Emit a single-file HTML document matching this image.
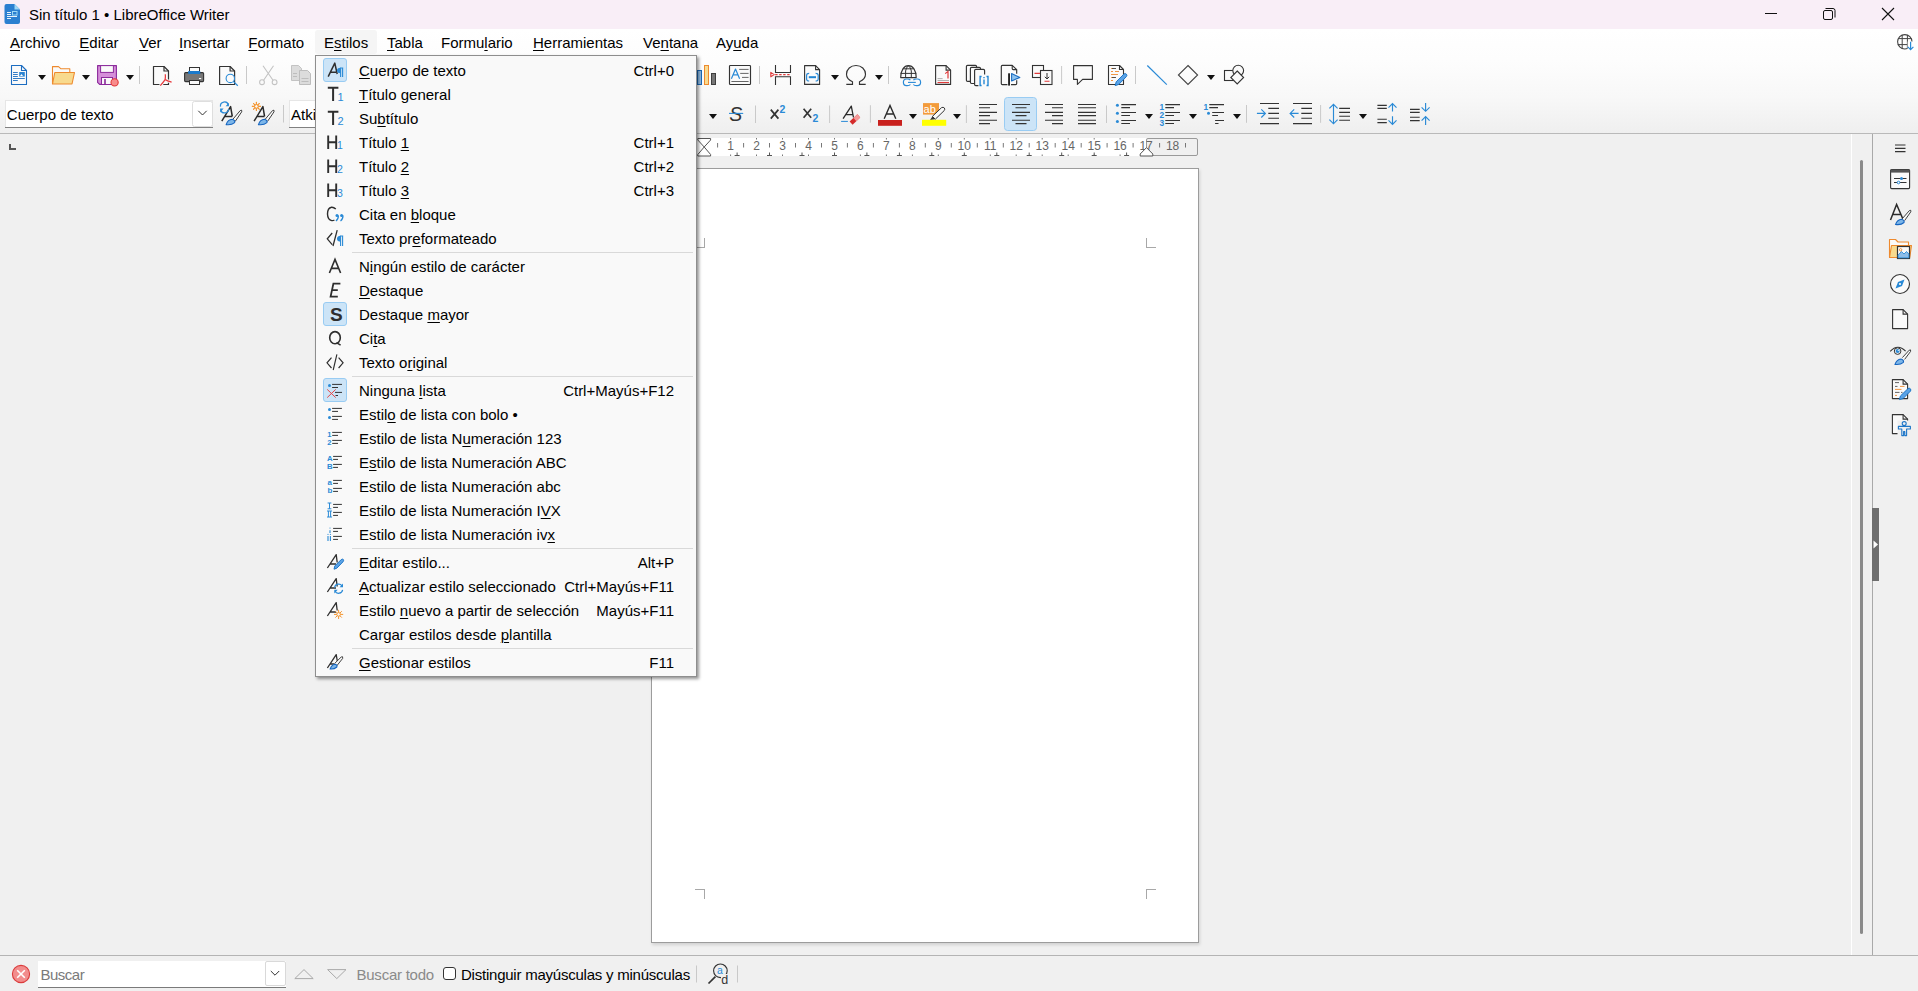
<!DOCTYPE html><html><head><meta charset="utf-8"><style>
*{margin:0;padding:0;box-sizing:border-box}
html,body{width:1918px;height:991px;overflow:hidden;background:#F0F0F0;font-family:"Liberation Sans", sans-serif}
.t{position:absolute;white-space:pre;line-height:normal;font-family:"Liberation Sans", sans-serif}
.a{position:absolute}
u{text-decoration:underline;text-underline-offset:2px;text-decoration-thickness:1px}
svg{position:absolute;overflow:visible}
</style></head><body>

<div class="a" style="left:0;top:0;width:1918px;height:29px;background:#F9EEF7"></div>
<div class="t" style="left:29px;top:6.3px;font-size:15px;color:#000;">Sin título 1 • LibreOffice Writer</div>
<div class="a" style="left:0;top:29px;width:1918px;height:104px;background:linear-gradient(#FFFFFF 0%,#FDFDFD 30%,#F8F8F8 65%,#EFEFEF 100%)"></div>
<div class="a" style="left:0;top:133px;width:1918px;height:1px;background:#B9B9B9"></div>
<div class="a" style="left:315px;top:30px;width:62px;height:24px;background:#F5F5F5;border-radius:3px"></div>
<div class="t" style="left:10px;top:34.3px;font-size:15px;color:#000;"><u>A</u>rchivo</div>
<div class="t" style="left:79.3px;top:34.3px;font-size:15px;color:#000;"><u>E</u>ditar</div>
<div class="t" style="left:139px;top:34.3px;font-size:15px;color:#000;"><u>V</u>er</div>
<div class="t" style="left:179px;top:34.3px;font-size:15px;color:#000;"><u>I</u>nsertar</div>
<div class="t" style="left:248.3px;top:34.3px;font-size:15px;color:#000;"><u>F</u>ormato</div>
<div class="t" style="left:324px;top:34.3px;font-size:15px;color:#000;">E<u>s</u>tilos</div>
<div class="t" style="left:387px;top:34.3px;font-size:15px;color:#000;"><u>T</u>abla</div>
<div class="t" style="left:441px;top:34.3px;font-size:15px;color:#000;">Formu<u>l</u>ario</div>
<div class="t" style="left:533px;top:34.3px;font-size:15px;color:#000;"><u>H</u>erramientas</div>
<div class="t" style="left:643px;top:34.3px;font-size:15px;color:#000;">Ve<u>n</u>tana</div>
<div class="t" style="left:716px;top:34.3px;font-size:15px;color:#000;">Ay<u>u</u>da</div>
<div class="a" style="left:9px;top:144px;width:2px;height:6px;background:#555"></div>
<div class="a" style="left:9px;top:148px;width:7px;height:2px;background:#555"></div>
<div class="a" style="left:651px;top:138px;width:495px;height:18px;background:#FFFFFF"></div>
<div class="a" style="left:1146px;top:138px;width:52px;height:18px;border:1px solid #9A9A9A;border-radius:2px;background:#F0F0F0"></div>
<div class="a" style="left:651px;top:168px;width:548px;height:775px;background:#FFF;border:1px solid #9C9C9C;box-shadow:1px 2px 3px rgba(0,0,0,0.13)"></div>
<div class="a" style="left:695px;top:247px;width:10px;height:1px;background:#A8A8A8"></div>
<div class="a" style="left:704px;top:238px;width:1px;height:10px;background:#A8A8A8"></div>
<div class="a" style="left:1146px;top:247px;width:10px;height:1px;background:#A8A8A8"></div>
<div class="a" style="left:1146px;top:238px;width:1px;height:10px;background:#A8A8A8"></div>
<div class="a" style="left:695px;top:889px;width:10px;height:1px;background:#A8A8A8"></div>
<div class="a" style="left:704px;top:889px;width:1px;height:10px;background:#A8A8A8"></div>
<div class="a" style="left:1146px;top:889px;width:10px;height:1px;background:#A8A8A8"></div>
<div class="a" style="left:1146px;top:889px;width:1px;height:10px;background:#A8A8A8"></div>
<div class="a" style="left:1851px;top:134px;width:1px;height:821px;background:#FFFFFF"></div>
<div class="a" style="left:1860px;top:160px;width:3px;height:774px;background:#8A8A8A;border-radius:2px"></div>
<div class="a" style="left:1872px;top:134px;width:1px;height:821px;background:#A9A9A9"></div>
<div class="a" style="left:1872px;top:508px;width:7px;height:73px;background:#6E6E6E"></div>
<svg style="left:0;top:0" width="1918" height="991"><path d="M1873.5 540.5 L1878 544.5 L1873.5 548.5Z" fill="#fff"/></svg>
<div class="a" style="left:0;top:955px;width:1918px;height:1px;background:#B4B4B4"></div>
<div class="a" style="left:38px;top:961px;width:248px;height:27px;background:#FFF;border-bottom:1px solid #7A7A7A"></div>
<div class="a" style="left:265px;top:961px;width:21px;height:25px;background:#FFF;border:1px solid #D9D9D9;border-radius:2px"></div>
<div class="t" style="left:40.5px;top:966.3px;font-size:15px;color:#7A7A7A;letter-spacing:-0.5px">Buscar</div>
<div class="t" style="left:356.5px;top:966.3px;font-size:15px;color:#8A8A8A;letter-spacing:-0.24px">Buscar todo</div>
<div class="a" style="left:443px;top:967px;width:13px;height:13px;border:1px solid #333;border-radius:3px;background:#FFF"></div>
<div class="t" style="left:461px;top:966.3px;font-size:15px;color:#000;letter-spacing:-0.23px">Distinguir mayúsculas y minúsculas</div>
<svg style="left:0;top:0" width="1918" height="991" viewBox="0 0 1918 991"><path d="M4.5 6 Q4.5 4 6.5 4 H14.5 L20 9.5 V22 Q20 24 18 24 H6.5 Q4.5 24 4.5 22 Z" fill="#2B7FD0"/><path d="M14.5 4 L20 9.5 H14.5 Z" fill="#9ED8F5"/><path d="M7 12.5 H11 M7 14.5 H11 M7 16.5 H17 M7 18.5 H11" stroke="#E8F2FB" stroke-width="1"/><rect x="12.5" y="11.5" width="4.5" height="3.5" fill="none" stroke="#9ED8F5" stroke-width="1"/><path d="M1765 13.5 H1777" stroke="#111" stroke-width="1"/><rect x="1823.5" y="10.5" width="9" height="9" rx="1.5" fill="none" stroke="#111" stroke-width="1"/><path d="M1825.5 8.5 H1833 Q1835 8.5 1835 10.5 V17.5" fill="none" stroke="#111" stroke-width="1"/><path d="M1882 8 L1894 20 M1894 8 L1882 20" stroke="#111" stroke-width="1.1"/><circle cx="1904.8" cy="41.8" r="7.2" fill="none" stroke="#444" stroke-width="1.1"/><path d="M1898 38.6 H1911.6 M1897.8 44.6 H1911.8 M1902.2 35 V48.6 M1907.4 35 V48.6" stroke="#444" stroke-width="1"/><rect x="1907.6" y="41.5" width="6" height="9" fill="#FFFFFF"/><path d="M1910.6 41.8 V49.6 M1907.8 46.8 L1910.6 49.6 L1913.4 46.8" fill="none" stroke="#2A8AD6" stroke-width="1.2"/><path d="M11.5 65.5 H21.5 L26.5 70.5 V84.5 H11.5 Z" fill="#FAFAFA" stroke="#1C6DC1" stroke-width="1.1" stroke-linejoin="round"/><path d="M21.5 65.5 V70.5 H26.5" fill="none" stroke="#1C6DC1" stroke-width="1.1"/><path d="M13 72.5 H17.8 M13 74.5 H17.8 M13 76.5 H17.8 M13 78.5 H24.8 M13 80.5 H17.8" stroke="#1C6DC1" stroke-width="0.9"/><rect x="19.2" y="72" width="5.6" height="4.6" fill="#2B84D2"/><path d="M20 76 L21.5 74 L23 76 Z" fill="#fff"/><path d="M38 75 H46 L42 80 Z" fill="#111"/><path d="M52.5 84 V66.6 H58.5 L61 68.8 H69.8 V72.4" fill="#FAFAFA" stroke="#EE8A2E" stroke-width="1.1" stroke-linejoin="round"/><path d="M54.8 72.5 H74.5 L72 84 H52.5 Z" fill="#F8DA8E" stroke="#EE8A2E" stroke-width="1.1" stroke-linejoin="round"/><path d="M82 75 H90 L86 80 Z" fill="#111"/><path d="M97.6 65.6 H116.4 V84.4 H99.6 L97.6 82.4 Z" fill="#D58FD9" stroke="#8B2A9B" stroke-width="1.1" stroke-linejoin="round"/><rect x="100.6" y="65.6" width="12.8" height="6.8" fill="#FAFAFA" stroke="#8B2A9B" stroke-width="1"/><rect x="101.5" y="77.5" width="11" height="7" fill="#FAFAFA" stroke="#8B2A9B" stroke-width="1"/><rect x="104.2" y="79" width="1.6" height="5.5" fill="#8B2A9B"/><circle cx="114.6" cy="82.4" r="3.6" fill="#F88C8C" stroke="#E23A3A" stroke-width="1.1"/><path d="M126 75 H134 L130 80 Z" fill="#111"/><path d="M139.5 66 V84" stroke="#C9C9C9" stroke-width="1"/><path d="M153.5 66.5 H164.0 L168.5 71.0 V84.5 H153.5 Z" fill="#FAFAFA" stroke="#333333" stroke-width="1.2" stroke-linejoin="round"/><path d="M164.0 66.5 V71.0 H168.5" fill="none" stroke="#333333" stroke-width="1.2"/><path d="M160.3 85.6 L165.3 80.2 V74.2 M165.3 80.2 Q168 80.6 171.6 82.2" fill="none" stroke="#FAFAFA" stroke-width="3"/><path d="M160.3 85.6 Q163.5 82 165.1 79.6 Q165.6 77 165.3 74.2 M165.1 79.6 Q167 81 171.6 82.2" fill="none" stroke="#E8393C" stroke-width="1.25"/><rect x="189.5" y="67.5" width="10" height="5" fill="#FAFAFA" stroke="#333" stroke-width="1"/><rect x="184.6" y="72.6" width="19" height="9" rx="1" fill="#777" stroke="#333" stroke-width="1.1"/><rect x="188.2" y="71" width="12" height="3" fill="#1A7ACC"/><rect x="199" y="78" width="2.2" height="1.1" fill="#fff"/><rect x="189.5" y="80.5" width="10" height="4" fill="#FAFAFA" stroke="#333" stroke-width="1"/><path d="M219.6 66.5 H230.1 L234.6 71.0 V84.5 H219.6 Z" fill="#FAFAFA" stroke="#333333" stroke-width="1.2" stroke-linejoin="round"/><path d="M230.1 66.5 V71.0 H234.6" fill="none" stroke="#333333" stroke-width="1.2"/><circle cx="230.3" cy="78.4" r="4.2" fill="#FAFAFA" stroke="#2A8AD6" stroke-width="1.1"/><path d="M233.3 81.4 L237.8 85.8" stroke="#2A8AD6" stroke-width="1.2"/><path d="M246.5 66 V84" stroke="#C9C9C9" stroke-width="1"/><circle cx="262" cy="82.2" r="2.4" fill="none" stroke="#C3C3C3" stroke-width="1.1"/><circle cx="274.6" cy="82.2" r="2.4" fill="none" stroke="#C3C3C3" stroke-width="1.1"/><path d="M263.6 80.3 L273.5 65.8 M273 80.3 L263 65.8" stroke="#C3C3C3" stroke-width="1.1"/><path d="M291.5 65.5 H298.5 L301.5 68.5 V80.5 H291.5 Z" fill="#DCDCDC" stroke="#C3C3C3"/><path d="M299.5 70.5 H307.5 L310.5 73.5 V84.5 H299.5 Z" fill="#DCDCDC" stroke="#BDBDBD"/><path d="M301.5 78.5 H308.5 M301.5 81.5 H308.5 M293 73.5 H297 M293 76.5 H297" stroke="#BDBDBD"/><rect x="697.5" y="70.5" width="4" height="14" fill="#8DB9E2" stroke="#1B69B6" stroke-width="1"/><rect x="704.5" y="65.5" width="4" height="19" fill="#F8DB92" stroke="#EE8A2E" stroke-width="1"/><rect x="711.5" y="73.5" width="4" height="11" fill="#777" stroke="#3E3E3E" stroke-width="1"/><rect x="729.5" y="65.5" width="21" height="19" rx="0.8" fill="#FAFAFA" stroke="#333" stroke-width="1.15"/><path d="M731.4 78.7 L735.5 69 L739.6 78.7 M733 74.8 H738" fill="none" stroke="#2A8AD6" stroke-width="1.2" stroke-linejoin="round"/><path d="M739.2 69.4 H748.6 M740.2 73.4 H748.6 M742 77.4 H748.6 M731.4 81.5 H748.6" stroke="#666" stroke-width="1"/><path d="M759.5 66 V84" stroke="#C9C9C9" stroke-width="1"/><path d="M775.5 65 V72.5 H790.5 V65 M775.5 85 V76.8 H790.5 V85" fill="none" stroke="#333" stroke-width="1.1"/><path d="M775.2 74.6 H791" stroke="#E03A3A" stroke-width="1.1" stroke-dasharray="2.4 1.6"/><path d="M770.8 72.4 L774.2 74.6 L770.8 76.8 Z" fill="#FAFAFA" stroke="#E03A3A" stroke-width="1.1" stroke-linejoin="round"/><path d="M804.6 65.6 H815.6 L819.6 69.6 V84.4 H804.6 Z" fill="#FAFAFA" stroke="#333333" stroke-width="1.1" stroke-linejoin="round"/><path d="M815.6 65.6 V69.6 H819.6" fill="none" stroke="#333333" stroke-width="1.1"/><path d="M809.2 73.4 Q806.8 73.4 806.6 75.2 V79.2 Q806.8 81 809.2 81 M815.6 73.4 Q818 73.4 818.2 75.2 V79.2 Q818 81 815.6 81" fill="none" stroke="#2A8AD6" stroke-width="1.2"/><path d="M808.8 77.2 H816" stroke="#1F84D2" stroke-width="2"/><path d="M831 75 H839 L835 80 Z" fill="#111"/><path d="M846.3 84.3 H852.5 V81.8 C848.5 80, 846.5 77.2, 846.5 74.3 C846.5 69.2, 850.6 65.5, 856 65.5 C861.4 65.5, 865.5 69.2, 865.5 74.3 C865.5 77.2, 863.5 80, 859.5 81.8 V84.3 H865.7" fill="none" stroke="#333" stroke-width="1.15"/><path d="M875 75 H883 L879 80 Z" fill="#111"/><path d="M888.5 66 V84" stroke="#C9C9C9" stroke-width="1"/><path d="M900.7 77.6 C900.7 70.2, 904 65.6, 908.45 65.6 C912.9 65.6, 916.2 70.2, 916.2 77.6 Z" fill="#FAFAFA" stroke="#333" stroke-width="1.15" stroke-linejoin="round"/><path d="M903 68.8 H913.9 M900.7 73.4 H916.2 M905.6 77.6 V71 Q905.9 67.6 908.45 65.8 Q911 67.6 911.3 71 V77.6" fill="none" stroke="#333" stroke-width="1"/><path d="M910.4 80.2 Q909.6 79 907.2 79 H906.4 Q903.4 79 903.4 82.35 Q903.4 85.7 906.4 85.7 H907.2 Q909.6 85.7 910.4 84.5 M913.4 80.2 Q914.2 79 916.6 79 H917.4 Q920.6 79 920.6 82.35 Q920.6 85.7 917.4 85.7 H916.6 Q914.2 85.7 913.4 84.5" fill="none" stroke="#2A8AD6" stroke-width="1.2"/><path d="M908 82.4 H915.8" stroke="#2A8AD6" stroke-width="1.1"/><path d="M935.6 65.6 H946.1 L950.6 70.1 V84.4 H935.6 Z" fill="#FAFAFA" stroke="#333333" stroke-width="1.1" stroke-linejoin="round"/><path d="M946.1 65.6 V70.1 H950.6" fill="none" stroke="#333333" stroke-width="1.1"/><path d="M945.2 73.6 L948 71.4 V78.6" fill="none" stroke="#E03A3A" stroke-width="1.2"/><path d="M937.5 78.6 H942.6 M937.5 80.5 H949" stroke="#A8A8A8" stroke-width="0.9"/><path d="M937.5 82.5 H949" stroke="#E03A3A" stroke-width="1.1"/><path d="M970.3 81.4 H967.6 Q966.4 81.4 966.4 80.2 V66.6 Q966.4 65.4 967.6 65.4 H975.4 Q976.6 65.4 976.6 66.6 V67.4" fill="none" stroke="#333" stroke-width="1.15"/><path d="M974.5 83.5 H971.6 Q970.4 83.5 970.4 82.3 V68.6 Q970.4 67.4 971.6 67.4 H979.3 Q980.5 67.4 980.5 68.6 V69.4" fill="none" stroke="#333" stroke-width="1.15"/><path d="M978.4 85.6 H975.8 Q974.6 85.6 974.6 84.4 V70.6 Q974.6 69.4 975.8 69.4 H983.4 Q984.6 69.4 984.6 70.6 V74.4" fill="none" stroke="#333" stroke-width="1.15"/><path d="M981.6 76.5 H980.1 V85.5 H981.6 M986.5 76.5 H988 V85.5 H986.5 M984 79.4 V84.2 M984 77.1 V78.2" fill="none" stroke="#1F84D2" stroke-width="1.35"/><path d="M1007.4 84.6 H1002.4 Q1001.3 84.6 1001.3 83.5 V66.4 Q1001.3 65.3 1002.4 65.3 H1012.2 L1016.7 69.6 V73.8 M1016.7 80.3 V83.5 Q1016.7 84.6 1015.6 84.6 H1011" fill="none" stroke="#333" stroke-width="1.15" stroke-linejoin="round"/><path d="M1012.2 65.3 V68.6 Q1012.2 69.6 1013.2 69.6 H1016.7" fill="none" stroke="#333" stroke-width="1.1"/><rect x="1008.1" y="73.3" width="1.9" height="12.3" fill="#222"/><path d="M1011.6 73.6 L1019.8 77.4 L1011.6 81 Z" fill="#8DC3F0" stroke="#1C6DC1" stroke-width="1.1" stroke-linejoin="round"/><rect x="1032.5" y="65.5" width="11" height="12" fill="#FAFAFA" stroke="#333" stroke-width="1.1"/><rect x="1040.5" y="70.5" width="11.5" height="14" fill="#FAFAFA" stroke="#333" stroke-width="1.1"/><path d="M1034.5 73.4 H1040 M1044.5 81.3 H1049.5" stroke="#E03A3A" stroke-width="1.1"/><path d="M1047 73 V79 M1044.8 76.8 L1047 79 L1049.2 76.8" fill="none" stroke="#333" stroke-width="1"/><path d="M1061.6 66 V84" stroke="#C9C9C9" stroke-width="1"/><path d="M1073.6 65.6 H1092.4 V79.4 H1082.6 L1077.4 84.4 V79.4 H1073.6 Z" fill="#FAFAFA" stroke="#333" stroke-width="1.1" stroke-linejoin="round"/><path d="M1108.5 65.5 H1119.5 L1123.5 69.5 V84.5 H1108.5 Z" fill="#FAFAFA" stroke="#333333" stroke-width="1.1" stroke-linejoin="round"/><path d="M1119.5 65.5 V69.5 H1123.5" fill="none" stroke="#333333" stroke-width="1.1"/><path d="M1111 68.5 H1114 M1111 71.5 H1113 M1115 71.5 H1119 M1111 74.5 H1118 M1111 77.5 H1115 M1111 80.5 H1113" stroke="#EE8A2E" stroke-width="0.9"/><path d="M1112 68.5 H1116 M1112 77.5 H1116" stroke="#444" stroke-width="0.9"/><path d="M1115.2 85.6 L1116.2 81.8 L1124 74 Q1125.2 73 1126.4 74.2 Q1127.4 75.4 1126.4 76.6 L1118.8 84.4 Z" fill="#5BA3E6" stroke="#1F77C8" stroke-width="1"/><path d="M1135.5 66 V84" stroke="#C9C9C9" stroke-width="1"/><path d="M1147.3 65.5 L1166.8 84.6" stroke="#2A8AD6" stroke-width="1.2"/><path d="M1188 65.5 L1197.6 75 L1188 84.5 L1178.4 75 Z" fill="none" stroke="#444" stroke-width="1.1"/><path d="M1207 75 H1215 L1211 80 Z" fill="#111"/><rect x="1224.5" y="70.5" width="10" height="10" fill="#FAFAFA" stroke="#333" stroke-width="1.1"/><circle cx="1238.2" cy="70.6" r="5.4" fill="#FAFAFA" stroke="#333" stroke-width="1.1"/><path d="M1237.2 71 L1243.6 77.5 L1237.2 84 L1230.8 77.5 Z" fill="#FAFAFA" stroke="#333" stroke-width="1.1"/><rect x="5.5" y="100.5" width="207" height="27" fill="#FFFFFF" stroke="#E6E6E6" stroke-width="1"/><path d="M5 127.5 H213" stroke="#808080" stroke-width="1"/><rect x="192.5" y="101.5" width="20" height="25" rx="2" fill="#FFFFFF" stroke="#DEDEDE" stroke-width="1"/><path d="M198.3 110.8 L202.5 115 L206.7 110.8" fill="none" stroke="#333" stroke-width="1"/><rect x="289.5" y="100.5" width="30" height="27" fill="#FFFFFF" stroke="#E6E6E6" stroke-width="1"/><path d="M289 127.5 H319" stroke="#808080" stroke-width="1"/><path d="M221.8 121.2 L230.6 106.6 L232.3 116.5 M224.6 116.4 H232.2" fill="none" stroke="#2A2A2A" stroke-width="1.5" stroke-linejoin="round"/><path d="M232.6 119.6 L240.2 110.6 Q242.3 109.2 241.7 111.8 L235.2 121.4" fill="#FAFAFA" stroke="#2A2A2A" stroke-width="0.9"/><path d="M226.2 124.6 Q227.8 119.6 232.2 119.3 Q235.5 120.3 234.6 122.6 Q231.5 125.3 226.2 124.6 Z" fill="#7DB6E8" stroke="#1565C0" stroke-width="1.1"/><path d="M254.10000000000002 121.2 L262.9 106.6 L264.6 116.5 M256.9 116.4 H264.5" fill="none" stroke="#2A2A2A" stroke-width="1.5" stroke-linejoin="round"/><path d="M264.9 119.6 L272.5 110.6 Q274.6 109.2 274.0 111.8 L267.5 121.4" fill="#FAFAFA" stroke="#2A2A2A" stroke-width="0.9"/><path d="M258.5 124.6 Q260.1 119.6 264.5 119.3 Q267.8 120.3 266.9 122.6 Q263.8 125.3 258.5 124.6 Z" fill="#7DB6E8" stroke="#1565C0" stroke-width="1.1"/><path d="M220.5 106.6 A4 4 0 0 1 228.3 104.9 M228.6 109 A4 4 0 0 1 220.8 110.2" fill="none" stroke="#2A8AD6" stroke-width="1.2"/><path d="M228.9 102.8 V106.3 H225.6 Z M220.1 112.4 V108.6 H223.6 Z" fill="#2A8AD6"/><circle cx="256.4" cy="106.4" r="1.9" fill="none" stroke="#F39530" stroke-width="1.1"/><path d="M256.4 102 V103.5 M256.4 109.3 V110.8 M252 106.4 H253.5 M259.3 106.4 H260.8 M253.3 103.3 L254.4 104.4 M258.4 108.4 L259.5 109.5 M259.5 103.3 L258.4 104.4 M254.4 108.4 L253.3 109.5" stroke="#F39530" stroke-width="1.1"/><path d="M256.4 101.8 V111 M251.8 106.4 H261 M253.2 103.2 L259.6 109.6 M259.6 103.2 L253.2 109.6" stroke="#F39530" stroke-width="1"/><circle cx="256.4" cy="106.4" r="1.8" fill="#FAFAFA" stroke="#F39530" stroke-width="1"/><path d="M283.5 105 V122.5" stroke="#C9C9C9" stroke-width="1"/><path d="M709 114 H717 L713 119 Z" fill="#111"/><text x="729.2" y="120.8" font-family="Liberation Sans" font-size="19.5" font-style="italic" fill="#333">S</text><path d="M729 113.4 H743.2" stroke="#2A8AD6" stroke-width="1.1"/><path d="M755.5 105.5 V123" stroke="#C9C9C9" stroke-width="1"/><path d="M770.8 109.6 L778.4 118.6 M778.4 109.6 L770.8 118.6" stroke="#333" stroke-width="1.7"/><text x="779.6" y="113.4" font-family="Liberation Sans" font-size="10.5" font-weight="bold" fill="#2A8AD6">2</text><path d="M803.6 108.8 L811.2 117.8 M811.2 108.8 L803.6 117.8" stroke="#333" stroke-width="1.7"/><text x="812.4" y="122" font-family="Liberation Sans" font-size="10.5" font-weight="bold" fill="#2A8AD6">2</text><path d="M829.6 105.5 V123" stroke="#C9C9C9" stroke-width="1"/><path d="M843.1 118.7 L851.3 106.1 L853.5 117.5 M845.8 114.6 H852.8" fill="none" stroke="#2A2A2A" stroke-width="1.3" stroke-linejoin="round"/><path d="M841.1 121.4 H847.9" stroke="#2A8AD6" stroke-width="1"/><path d="M849.6 121.4 L857.4 114.3 L860.2 117.6 L852.6 124.8 Z" fill="#D42B2B"/><path d="M853.5 117.9 L857.4 114.3 L860.2 117.6 L856.4 121.2 Z" fill="#F59A9A"/><path d="M870.4 105.2 V122.7" stroke="#C9C9C9" stroke-width="1"/><path d="M884.2 118.7 L890 105.5 L895.8 118.7 M886.2 114 H893.8" fill="none" stroke="#2A2A2A" stroke-width="1.4"/><rect x="878" y="120" width="24" height="5.8" fill="#C9211E"/><path d="M909 114 H917 L913 119 Z" fill="#111"/><rect x="923" y="103.1" width="16" height="11.5" fill="#F39B3B"/><text x="923.6" y="113.3" font-family="Liberation Sans" font-size="11" fill="#FFFFFF">ab</text><path d="M932.4 116.4 L941.6 107.6 Q943.2 106.8 944.4 108 Q945.2 109.3 944.2 110.6 L935.3 119.2 Z" fill="#FAFAFA" stroke="#333" stroke-width="1"/><path d="M930 120 L932.4 116.4 L935.3 119.2 Z" fill="#333"/><rect x="922" y="119.8" width="24.2" height="6" fill="#FFFF00"/><path d="M953 114 H961 L957 119 Z" fill="#111"/><path d="M966.4 105.2 V123" stroke="#C9C9C9" stroke-width="1"/><path d="M979 104.5 H997 M979 107.8 H990 M979 112.4 H997 M979 115.6 H990 M979 120.3 H997 M979 123.6 H990 " stroke="#333" stroke-width="1.1"/><rect x="1004.5" y="97.5" width="32" height="33" rx="3" fill="#CCE4F7" stroke="#99CCF3" stroke-width="1"/><path d="M1012 104.5 H1030 M1015.5 107.8 H1026.5 M1012 112.4 H1030 M1015.5 115.6 H1026.5 M1012 120.3 H1030 M1015.5 123.6 H1026.5 " stroke="#333" stroke-width="1.1"/><path d="M1045 104.5 H1063 M1052 107.8 H1063 M1045 112.4 H1063 M1052 115.6 H1063 M1045 120.3 H1063 M1052 123.6 H1063 " stroke="#333" stroke-width="1.1"/><path d="M1078 104.5 H1096 M1078 107.8 H1096 M1078 112.4 H1096 M1078 115.6 H1096 M1078 120.3 H1096 M1078 123.6 H1096 " stroke="#333" stroke-width="1.1"/><path d="M1106.5 105.5 V123" stroke="#C9C9C9" stroke-width="1"/><circle cx="1117.4" cy="105.3" r="1.5" fill="#2A8AD6"/><circle cx="1117.4" cy="113.3" r="1.5" fill="#2A8AD6"/><circle cx="1117.4" cy="121.5" r="1.5" fill="#2A8AD6"/><path d="M1121.3 104.6 H1136 M1121.3 107.6 H1130 M1121.3 112.5 H1136 M1121.3 115.5 H1130 M1121.3 120.5 H1136 M1121.3 123.5 H1130 " stroke="#333" stroke-width="1.1"/><path d="M1145 114 H1153 L1149 119 Z" fill="#111"/><path d="M1165.3 104.6 H1180 M1165.3 107.6 H1174 M1165.3 112.5 H1180 M1165.3 115.5 H1174 M1165.3 120.5 H1180 M1165.3 123.5 H1174 " stroke="#333" stroke-width="1.1"/><text x="1159.6" y="110" font-family="Liberation Sans" font-size="8.4" font-weight="bold" fill="#2A8AD6">1</text><text x="1159.6" y="118" font-family="Liberation Sans" font-size="8.4" font-weight="bold" fill="#2A8AD6">2</text><text x="1159.6" y="126.2" font-family="Liberation Sans" font-size="8.4" font-weight="bold" fill="#2A8AD6">3</text><path d="M1189 114 H1197 L1193 119 Z" fill="#111"/><text x="1203.4" y="110" font-family="Liberation Sans" font-size="8.4" font-weight="bold" fill="#2A8AD6">1</text><circle cx="1208.5" cy="113.3" r="1.5" fill="#2A8AD6"/><path d="M1209.3 104.6 H1224 M1209.3 107.6 H1218 M1212.2 112.5 H1224 M1212.2 115.5 H1218 M1215.1 120.5 H1224 M1215.1 123.5 H1218.5" stroke="#333" stroke-width="1.1"/><path d="M1233 114 H1241 L1237 119 Z" fill="#111"/><path d="M1246.5 105 V122.8" stroke="#C9C9C9" stroke-width="1"/><path d="M1260 103.5 H1279 M1260 123.6 H1279 M1268.3 108.4 H1279 M1268.3 113.4 H1279 M1268.3 118.3 H1279 M1293 103.5 H1312 M1293 123.6 H1312 M1301.3 108.4 H1312 M1301.3 113.4 H1312 M1301.3 118.3 H1312" stroke="#333" stroke-width="1.1"/><path d="M1256.9 113.4 H1265.4 M1261.3 109.3 L1265.4 113.4 L1261.3 117.5 M1290.1 113.4 H1298.6 M1294.2 109.3 L1290.1 113.4 L1294.2 117.5" fill="none" stroke="#2A8AD6" stroke-width="1.15"/><path d="M1320.6 105 V122.8" stroke="#C9C9C9" stroke-width="1"/><path d="M1333.5 104.3 V123.8 M1329.4 108.4 L1333.5 104.3 L1337.6 108.4 M1329.4 119.7 L1333.5 123.8 L1337.6 119.7" fill="none" stroke="#2A8AD6" stroke-width="1.15"/><path d="M1339.2 108.4 H1350 M1339.2 112.4 H1350 M1339.2 116.3 H1350 M1339.2 120.3 H1350" stroke="#333" stroke-width="1.1"/><path d="M1359 114 H1367 L1363 119 Z" fill="#111"/><path d="M1377.4 105.4 H1386.8 M1377.4 108.4 H1386.8 M1377.4 119.3 H1386.8 M1377.4 122.6 H1386.8" stroke="#333" stroke-width="1.1"/><path d="M1392.5 103.6 V111.4 M1388.5 107.6 L1392.5 103.6 L1396.5 107.6 M1392.5 116.3 V124.4 M1388.5 120.4 L1392.5 124.4 L1396.5 120.4" fill="none" stroke="#2A8AD6" stroke-width="1.15"/><path d="M1410 109.4 H1419.7 M1410 112.4 H1419.7 M1410 117.3 H1419.7 M1410 120.6 H1419.7" stroke="#333" stroke-width="1.1"/><path d="M1425.6 103 V111.3 M1421.6 107.3 L1425.6 111.3 L1429.6 107.3 M1425.6 116.6 V125 M1421.6 120.6 L1425.6 116.6 L1429.6 120.6" fill="none" stroke="#2A8AD6" stroke-width="1.15"/><text x="730.6" y="150.2" text-anchor="middle" font-family="Liberation Sans" font-size="12" fill="#666">1</text><text x="756.5" y="150.2" text-anchor="middle" font-family="Liberation Sans" font-size="12" fill="#666">2</text><text x="782.5" y="150.2" text-anchor="middle" font-family="Liberation Sans" font-size="12" fill="#666">3</text><text x="808.5" y="150.2" text-anchor="middle" font-family="Liberation Sans" font-size="12" fill="#666">4</text><text x="834.5" y="150.2" text-anchor="middle" font-family="Liberation Sans" font-size="12" fill="#666">5</text><text x="860.4" y="150.2" text-anchor="middle" font-family="Liberation Sans" font-size="12" fill="#666">6</text><text x="886.4" y="150.2" text-anchor="middle" font-family="Liberation Sans" font-size="12" fill="#666">7</text><text x="912.4" y="150.2" text-anchor="middle" font-family="Liberation Sans" font-size="12" fill="#666">8</text><text x="938.3" y="150.2" text-anchor="middle" font-family="Liberation Sans" font-size="12" fill="#666">9</text><text x="964.3" y="150.2" text-anchor="middle" font-family="Liberation Sans" font-size="12" fill="#666">10</text><text x="990.3" y="150.2" text-anchor="middle" font-family="Liberation Sans" font-size="12" fill="#666">11</text><text x="1016.2" y="150.2" text-anchor="middle" font-family="Liberation Sans" font-size="12" fill="#666">12</text><text x="1042.2" y="150.2" text-anchor="middle" font-family="Liberation Sans" font-size="12" fill="#666">13</text><text x="1068.2" y="150.2" text-anchor="middle" font-family="Liberation Sans" font-size="12" fill="#666">14</text><text x="1094.2" y="150.2" text-anchor="middle" font-family="Liberation Sans" font-size="12" fill="#666">15</text><text x="1120.1" y="150.2" text-anchor="middle" font-family="Liberation Sans" font-size="12" fill="#666">16</text><text x="1146.1" y="150.2" text-anchor="middle" font-family="Liberation Sans" font-size="12" fill="#666">17</text><text x="1172.6" y="150.2" text-anchor="middle" font-family="Liberation Sans" font-size="12" fill="#666">18</text><path d="M717.6 143 V147.5 M743.6 143 V147.5 M730.6 138 V139.5 M730.6 154.5 V156 M769.5 143 V147.5 M756.5 138 V139.5 M756.5 154.5 V156 M795.5 143 V147.5 M782.5 138 V139.5 M782.5 154.5 V156 M821.5 143 V147.5 M808.5 138 V139.5 M808.5 154.5 V156 M847.4 143 V147.5 M834.5 138 V139.5 M834.5 154.5 V156 M873.4 143 V147.5 M860.4 138 V139.5 M860.4 154.5 V156 M899.4 143 V147.5 M886.4 138 V139.5 M886.4 154.5 V156 M925.3 143 V147.5 M912.4 138 V139.5 M912.4 154.5 V156 M951.3 143 V147.5 M938.3 138 V139.5 M938.3 154.5 V156 M977.3 143 V147.5 M964.3 138 V139.5 M964.3 154.5 V156 M1003.3 143 V147.5 M990.3 138 V139.5 M990.3 154.5 V156 M1029.2 143 V147.5 M1016.2 138 V139.5 M1016.2 154.5 V156 M1055.2 143 V147.5 M1042.2 138 V139.5 M1042.2 154.5 V156 M1081.2 143 V147.5 M1068.2 138 V139.5 M1068.2 154.5 V156 M1107.1 143 V147.5 M1094.2 138 V139.5 M1094.2 154.5 V156 M1133.1 143 V147.5 M1120.1 138 V139.5 M1120.1 154.5 V156 M1159.6 143 V147.5 M1185.5 143 V147.5 " stroke="#777" stroke-width="1"/><path d="M737.1 152.5 V156 M734.6 155.5 H739.6 M769.5 152.5 V156 M767.0 155.5 H772.0 M802.0 152.5 V156 M799.5 155.5 H804.5 M834.5 152.5 V156 M832.0 155.5 H837.0 M866.9 152.5 V156 M864.4 155.5 H869.4 M899.4 152.5 V156 M896.9 155.5 H901.9 M931.8 152.5 V156 M929.3 155.5 H934.3 M964.3 152.5 V156 M961.8 155.5 H966.8 M996.8 152.5 V156 M994.3 155.5 H999.3 M1029.2 152.5 V156 M1026.7 155.5 H1031.7 M1061.7 152.5 V156 M1059.2 155.5 H1064.2 M1094.2 152.5 V156 M1091.7 155.5 H1096.7 M1126.6 152.5 V156 M1124.1 155.5 H1129.1 " stroke="#555" stroke-width="1"/><path d="M697.8 138.5 H710.6 V140 L704.2 147 L710.6 154.5 V156 H697.8 V154.5 L704.2 147 L697.8 140 Z" fill="#FFF" stroke="#555" stroke-width="1"/><path d="M1140.2 156 V154 L1146.5 147.6 L1152.8 154 V156 Z" fill="#FFF" stroke="#555" stroke-width="1"/><path d="M1895 145 H1905.5 M1895 148.4 H1905.5 M1895 151.6 H1905.5" stroke="#333" stroke-width="1.1"/><rect x="1890.6" y="169.6" width="19" height="19" rx="1" fill="#FAFAFA" stroke="#333" stroke-width="1.1"/><rect x="1890.6" y="169.6" width="19" height="3" fill="#555"/><path d="M1894 178.5 H1906.5 M1894 182.5 H1906.5" stroke="#333" stroke-width="1"/><circle cx="1901.5" cy="178.5" r="1.5" fill="#2A8AD6"/><circle cx="1898.5" cy="182.5" r="1.3" fill="#FAFAFA" stroke="#2A8AD6" stroke-width="1"/><path d="M1890.5 220 L1896.6 204.5 L1902.7 218.5 M1892.7 214.6 H1900.5" fill="none" stroke="#2A2A2A" stroke-width="1.5"/><path d="M1902 219 L1909.4 210.6 Q1911.4 209.4 1910.8 211.8 L1904.6 220.6" fill="#FAFAFA" stroke="#2A2A2A" stroke-width="0.9"/><path d="M1895.6 224.4 Q1897.2 219.6 1901.6 219.2 Q1904.8 220.2 1904 222.5 Q1901 225.2 1895.6 224.4 Z" fill="#7DB6E8" stroke="#1565C0" stroke-width="1.1"/><path d="M1889.5 257.5 V239.5 H1895.5 L1898 242 H1908.5 V246" fill="#FAFAFA" stroke="#EE8A2E" stroke-width="1.1" stroke-linejoin="round"/><path d="M1889.5 257.5 L1891.5 245.5 H1911.5 L1909.8 257.5 Z" fill="#F8DA8E" stroke="#EE8A2E" stroke-width="1.1" stroke-linejoin="round"/><rect x="1897.5" y="246.5" width="12" height="12" fill="#FAFAFA" stroke="#333" stroke-width="1.2"/><path d="M1898.2 257.8 V255 L1901.5 251.5 L1904 254 L1906.5 251.5 L1908.8 254 V257.8 Z" fill="#8DBDE8" stroke="#2A8AD6" stroke-width="0.9"/><circle cx="1900.6" cy="249.8" r="1.2" fill="none" stroke="#EE8A2E" stroke-width="0.9"/><circle cx="1900" cy="284" r="9.5" fill="#FAFAFA" stroke="#333" stroke-width="1.1"/><path d="M1904.5 279.5 L1902 286 L1895.5 288.5 L1898 282 Z" fill="#2A8AD6"/><circle cx="1900" cy="284" r="1.1" fill="#FAFAFA"/><path d="M1892.6 309.6 H1903.1 L1907.6 314.1 V328.6 H1892.6 Z" fill="#FAFAFA" stroke="#333333" stroke-width="1.1" stroke-linejoin="round"/><path d="M1903.1 309.6 V314.1 H1907.6" fill="none" stroke="#333333" stroke-width="1.1"/><path d="M1890.2 351.4 Q1897.8 343.2 1905.6 351.2" fill="none" stroke="#333" stroke-width="1.1"/><circle cx="1897.6" cy="351.1" r="3.3" fill="#F0F0F0" stroke="#333" stroke-width="1"/><circle cx="1897.6" cy="351.1" r="2" fill="#2A8AD6"/><circle cx="1898.3" cy="350.4" r="0.6" fill="#F0F0F0"/><path d="M1902.4 357.6 L1909.2 350.2 Q1911.2 349 1910.6 351.4 L1904.6 359.4" fill="#FAFAFA" stroke="#2A2A2A" stroke-width="0.9"/><path d="M1895 364.4 Q1896.6 359.4 1901 359 Q1904.2 360 1903.4 362.3 Q1900.4 365 1895 364.4 Z" fill="#7DB6E8" stroke="#1565C0" stroke-width="1.1"/><path d="M1892.4 379.6 H1903.1 L1907.6 384.1 V398.6 H1892.4 Z" fill="#FAFAFA" stroke="#333333" stroke-width="1.1" stroke-linejoin="round"/><path d="M1903.1 379.6 V384.1 H1907.6" fill="none" stroke="#333333" stroke-width="1.1"/><path d="M1895 382.6 H1899 M1895 386.4 H1897.5 M1895 392.4 H1899.5 M1901 392.4 H1902.5" stroke="#555" stroke-width="0.9"/><path d="M1900 386.4 H1904.5 M1895 389.4 H1901.5 M1895 395.4 H1897" stroke="#EE8A2E" stroke-width="0.9"/><path d="M1899.4 399.6 L1900.4 396 L1908 388.6 Q1909.2 387.6 1910.4 388.8 Q1911.4 390 1910.4 391.2 L1903 398.6 Z" fill="#5BA3E6" stroke="#1F77C8" stroke-width="1"/><path d="M1892.4 414.6 H1903.1 L1907.6 419.1 V433.6 H1892.4 Z" fill="#FAFAFA" stroke="#333333" stroke-width="1.1" stroke-linejoin="round"/><path d="M1903.1 414.6 V419.1 H1907.6" fill="none" stroke="#333333" stroke-width="1.1"/><rect x="1897.5" y="420.5" width="14" height="16" fill="#F0F0F0"/><circle cx="1904.2" cy="423.6" r="2" fill="#F0F0F0" stroke="#1F77C8" stroke-width="1.1"/><path d="M1898.4 426.4 H1910.4 V429 H1906.6 V435.6 H1904.8 V431.6 H1903.6 V435.6 H1901.8 V429 H1898.4 Z" fill="#F0F0F0" stroke="#1F77C8" stroke-width="1.1" stroke-linejoin="round"/><circle cx="21" cy="974" r="8.6" fill="#F28D8D" stroke="#DB3B3B" stroke-width="1.1"/><path d="M17.2 970.2 L24.8 977.8 M24.8 970.2 L17.2 977.8" stroke="#FFF" stroke-width="1.6"/><path d="M270.8 971 L275 975.2 L279.2 971" fill="none" stroke="#333" stroke-width="1"/><path d="M294.8 978.6 L304 969.6 L313.2 978.6 Z" fill="none" stroke="#A9A9A9" stroke-width="1"/><path d="M327.6 969.6 L336.8 978.6 L346 969.6 Z" fill="none" stroke="#A9A9A9" stroke-width="1"/><path d="M696.5 965.5 V982.5" stroke="#C9C9C9" stroke-width="1"/><path d="M737.5 965.5 V982.5" stroke="#C9C9C9" stroke-width="1"/><circle cx="720.4" cy="970.8" r="6.8" fill="#F0F0F0" stroke="#333" stroke-width="1.15"/><path d="M708.5 983.5 L715.4 976.6" stroke="#333" stroke-width="1.7"/><text x="716.9" y="974.2" font-family="Liberation Sans" font-size="10.5" fill="#2A8AD6">a</text><rect x="721" y="974" width="8" height="11" fill="#F0F0F0"/><text x="721.2" y="984" font-family="Liberation Sans" font-size="12.5" fill="#333">d</text></svg>
<div class="t" style="left:6.8px;top:106.3px;font-size:15px;color:#000;">Cuerpo de texto</div>
<div class="t" style="left:291px;top:106.3px;font-size:15px;color:#000;">Atkinson Hyperlegible</div>
<div class="a" style="left:315px;top:55px;width:382px;height:622px;background:#F9F9F9;border:1px solid #8E8E8E;box-shadow:2px 2px 3px rgba(0,0,0,0.42)"></div>
<div class="t" style="left:359px;top:62.3px;font-size:15px;color:#000;"><u>C</u>uerpo de texto</div>
<div class="t" style="right:1244px;top:62.3px;font-size:15px">Ctrl+0</div>
<div class="t" style="left:359px;top:86.3px;font-size:15px;color:#000;"><u>T</u>ítulo general</div>
<div class="t" style="left:359px;top:110.3px;font-size:15px;color:#000;">Su<u>b</u>título</div>
<div class="t" style="left:359px;top:134.3px;font-size:15px;color:#000;">Título <u>1</u></div>
<div class="t" style="right:1244px;top:134.3px;font-size:15px">Ctrl+1</div>
<div class="t" style="left:359px;top:158.3px;font-size:15px;color:#000;">Título <u>2</u></div>
<div class="t" style="right:1244px;top:158.3px;font-size:15px">Ctrl+2</div>
<div class="t" style="left:359px;top:182.3px;font-size:15px;color:#000;">Título <u>3</u></div>
<div class="t" style="right:1244px;top:182.3px;font-size:15px">Ctrl+3</div>
<div class="t" style="left:359px;top:206.3px;font-size:15px;color:#000;">Cita en <u>b</u>loque</div>
<div class="t" style="left:359px;top:230.3px;font-size:15px;color:#000;">Texto pr<u>e</u>formateado</div>
<div class="a" style="left:352px;top:252px;width:341px;height:1px;background:#D9D9D9"></div>
<div class="t" style="left:359px;top:258.3px;font-size:15px;color:#000;">N<u>i</u>ngún estilo de carácter</div>
<div class="t" style="left:359px;top:282.3px;font-size:15px;color:#000;"><u>D</u>estaque</div>
<div class="t" style="left:359px;top:306.3px;font-size:15px;color:#000;">Destaque <u>m</u>ayor</div>
<div class="t" style="left:359px;top:330.3px;font-size:15px;color:#000;">Ci<u>t</u>a</div>
<div class="t" style="left:359px;top:354.3px;font-size:15px;color:#000;">Texto o<u>r</u>iginal</div>
<div class="a" style="left:352px;top:376px;width:341px;height:1px;background:#D9D9D9"></div>
<div class="t" style="left:359px;top:382.3px;font-size:15px;color:#000;">Ninguna <u>l</u>ista</div>
<div class="t" style="right:1244px;top:382.3px;font-size:15px">Ctrl+Mayús+F12</div>
<div class="t" style="left:359px;top:406.3px;font-size:15px;color:#000;">Estil<u>o</u> de lista con bolo •</div>
<div class="t" style="left:359px;top:430.3px;font-size:15px;color:#000;">Estilo de lista N<u>u</u>meración 123</div>
<div class="t" style="left:359px;top:454.3px;font-size:15px;color:#000;">E<u>s</u>tilo de lista Numeración ABC</div>
<div class="t" style="left:359px;top:478.3px;font-size:15px;color:#000;">Estilo de lista Numeración abc</div>
<div class="t" style="left:359px;top:502.3px;font-size:15px;color:#000;">Estilo de lista Numeración I<u>V</u>X</div>
<div class="t" style="left:359px;top:526.3px;font-size:15px;color:#000;">Estilo de lista Numeración iv<u>x</u></div>
<div class="a" style="left:352px;top:548px;width:341px;height:1px;background:#D9D9D9"></div>
<div class="t" style="left:359px;top:554.3px;font-size:15px;color:#000;"><u>E</u>ditar estilo...</div>
<div class="t" style="right:1244px;top:554.3px;font-size:15px">Alt+P</div>
<div class="t" style="left:359px;top:578.3px;font-size:15px;color:#000;"><u>A</u>ctualizar estilo seleccionado</div>
<div class="t" style="right:1244px;top:578.3px;font-size:15px">Ctrl+Mayús+F11</div>
<div class="t" style="left:359px;top:602.3px;font-size:15px;color:#000;">Estilo <u>n</u>uevo a partir de selección</div>
<div class="t" style="right:1244px;top:602.3px;font-size:15px">Mayús+F11</div>
<div class="t" style="left:359px;top:626.3px;font-size:15px;color:#000;">Cargar estilos desde <u>p</u>lantilla</div>
<div class="a" style="left:352px;top:648px;width:341px;height:1px;background:#D9D9D9"></div>
<div class="t" style="left:359px;top:654.3px;font-size:15px;color:#000;"><u>G</u>estionar estilos</div>
<div class="t" style="right:1244px;top:654.3px;font-size:15px">F11</div>
<div class="a" style="left:323px;top:58px;width:24px;height:24px;background:#CCE4F7;border:1px solid #99CCF3;border-radius:3px"></div>
<div class="a" style="left:323px;top:302px;width:24px;height:24px;background:#CCE4F7;border:1px solid #99CCF3;border-radius:3px"></div>
<div class="a" style="left:323px;top:378px;width:24px;height:24px;background:#CCE4F7;border:1px solid #99CCF3;border-radius:3px"></div>
<svg style="left:0;top:0" width="1918" height="991" viewBox="0 0 1918 991"><path d="M328.2 76.7 L334.8 63.1 L337.2 74 M330.6 72.2 H336" fill="none" stroke="#2E2E2E" stroke-width="1.5" stroke-linejoin="round"/><path d="M340 68 H343.2 M340.6 68 V77 M342.6 68 V77" fill="none" stroke="#2A8AD6" stroke-width="1.1"/><path d="M340.6 67.8 Q336.8 68 337 70.8 Q337.3 73.3 340.6 73.3 Z" fill="#2A8AD6"/><path d="M327.8 87.8 H338.4 M333.1 87.8 V101" fill="none" stroke="#2E2E2E" stroke-width="2"/><text x="337.6" y="101" font-family="Liberation Sans" font-size="11" fill="#2A8AD6">1</text><path d="M327.8 111.8 H338.4 M333.1 111.8 V125" fill="none" stroke="#2E2E2E" stroke-width="2"/><text x="337.6" y="125" font-family="Liberation Sans" font-size="11" fill="#2A8AD6">2</text><path d="M328.2 135.4 V149 M336.2 135.4 V149 M328.2 142.3 H336.2" fill="none" stroke="#2E2E2E" stroke-width="1.9"/><text x="337.0" y="149" font-family="Liberation Sans" font-size="10.5" fill="#2A8AD6">1</text><path d="M328.2 159.4 V173 M336.2 159.4 V173 M328.2 166.3 H336.2" fill="none" stroke="#2E2E2E" stroke-width="1.9"/><text x="337.0" y="173" font-family="Liberation Sans" font-size="10.5" fill="#2A8AD6">2</text><path d="M328.2 183.4 V197 M336.2 183.4 V197 M328.2 190.3 H336.2" fill="none" stroke="#2E2E2E" stroke-width="1.9"/><text x="337.0" y="197" font-family="Liberation Sans" font-size="10.5" fill="#2A8AD6">3</text><path d="M335.8 209 Q333.6 207 331.5 207.2 Q327.5 208 327.5 214 Q327.7 220 331.8 220.6 Q333.2 220.8 334.4 220" fill="none" stroke="#2E2E2E" stroke-width="1.4"/><circle cx="337.0" cy="215.6" r="1.5" fill="#2A8AD6"/><path d="M338.4 215.6 Q338.4 219.5 335.9 221" fill="none" stroke="#2A8AD6" stroke-width="1.3"/><circle cx="341.6" cy="215.6" r="1.5" fill="#2A8AD6"/><path d="M343.0 215.6 Q343.0 219.5 340.5 221" fill="none" stroke="#2A8AD6" stroke-width="1.3"/><path d="M332.2 233 L327.3 238.8 L332.2 244.6 M337.2 230.2 L333 246" fill="none" stroke="#2E2E2E" stroke-width="1.3"/><path d="M340 236 H343.2 M340.6 236 V246 M342.6 236 V246" fill="none" stroke="#2A8AD6" stroke-width="1.1"/><path d="M340.6 235.8 Q336.8 236 337 239 Q337.3 241.6 340.6 241.6 Z" fill="#2A8AD6"/><path d="M329.4 273 L335 259.4 L340.6 273 M331.5 268.4 H338.5" fill="none" stroke="#2E2E2E" stroke-width="1.6"/><path d="M340.4 283.6 H333.4 L330.6 296.6 H337.8 M331.8 290.2 H337.8" fill="none" stroke="#2E2E2E" stroke-width="1.8"/><text x="330" y="321" font-family="Liberation Sans" font-size="19" font-weight="bold" fill="#2E2E2E">S</text><ellipse cx="335" cy="337.7" rx="5.3" ry="6.1" fill="none" stroke="#2E2E2E" stroke-width="1.6"/><path d="M336.4 342.6 L340.6 345.2" stroke="#2E2E2E" stroke-width="1.5"/><path d="M331.5 357.6 L327 362.8 L331.5 368 M338.6 357.6 L343.1 362.8 L338.6 368 M336.9 354.4 L333.2 370" fill="none" stroke="#2E2E2E" stroke-width="1.15"/><circle cx="329.5" cy="385.5" r="1.5" fill="#2A8AD6"/><path d="M332.1 384.4 H342 M332.1 387.5 H338 M335 392.4 H342 M335.5 395.5 H338" stroke="#333" stroke-width="1"/><path d="M327.2 389.4 L335.7 397.6 M335.7 389.4 L327.2 397.6" stroke="#E84848" stroke-width="1"/><circle cx="329.5" cy="409.5" r="1.5" fill="#2A8AD6"/><circle cx="329.5" cy="417.5" r="1.5" fill="#2A8AD6"/><path d="M332.1 408.4 H341.9 M332.1 411.4 H338 M332.1 416.4 H341.9 M332.1 419.4 H338" stroke="#333" stroke-width="1"/><text x="327.2" y="436.9" font-family="Liberation Sans" font-size="7.6" font-weight="bold" fill="#2A8AD6">1</text><text x="327.2" y="444.9" font-family="Liberation Sans" font-size="7.6" font-weight="bold" fill="#2A8AD6">2</text><path d="M332.2 432.4 H341.9 M332.2 435.4 H338 M332.2 440.4 H341.9 M332.2 443.4 H338" stroke="#333" stroke-width="1"/><text x="327" y="460.9" font-family="Liberation Sans" font-size="7.8" font-weight="bold" fill="#2A8AD6">A</text><text x="327" y="468.9" font-family="Liberation Sans" font-size="7.8" font-weight="bold" fill="#2A8AD6">B</text><path d="M333.1 456.4 H341.9 M333.1 459.4 H338 M333.1 464.4 H341.9 M333.1 467.4 H338" stroke="#333" stroke-width="1"/><text x="327.4" y="484.9" font-family="Liberation Sans" font-size="8" font-weight="bold" fill="#2A8AD6">a</text><text x="327.4" y="492.9" font-family="Liberation Sans" font-size="8" font-weight="bold" fill="#2A8AD6">b</text><path d="M333.1 480.4 H341.9 M333.1 483.4 H338 M333.1 488.4 H341.9 M333.1 491.4 H338" stroke="#333" stroke-width="1"/><path d="M327.6 503 H331.4 M329.5 503 V508.8 M327.6 508.8 H331.4 M327 511 H332 M328.4 511 V517 M330.6 511 V517 M327 517 H332" stroke="#2A8AD6" stroke-width="1"/><path d="M333.1 504.4 H341.9 M333.1 507.4 H338 M333.1 512.4 H341.9 M333.1 515.4 H338" stroke="#333" stroke-width="1"/><path d="M330 530.2 V533 M328 536 V541 M330.4 536 V541" stroke="#2A8AD6" stroke-width="1.1"/><circle cx="330" cy="528" r="0.6" fill="#2A8AD6"/><circle cx="328" cy="534.3" r="0.6" fill="#2A8AD6"/><circle cx="330.4" cy="534.3" r="0.6" fill="#2A8AD6"/><path d="M333.1 528.4 H341.9 M333.1 531.4 H338 M333.1 536.4 H341.9 M333.1 539.4 H338" stroke="#333" stroke-width="1"/><path d="M327.4 568 L336.2 554.6 L337.2 562.5 M330 564 H336" fill="none" stroke="#2E2E2E" stroke-width="1.3" stroke-linejoin="round"/><path d="M334 569.2 L334.8 566 L341.2 559.6 Q342.6 558.6 343.4 559.6 Q344 560.6 343 561.8 L336.8 568.2 Z" fill="#5BA3E6" stroke="#1F77C8" stroke-width="1"/><path d="M327.4 592 L336.2 578.6 L337.2 586.5 M330 588 H336" fill="none" stroke="#2E2E2E" stroke-width="1.3" stroke-linejoin="round"/><path d="M334.6 587.6 A4.1 4.1 0 0 1 342 585.8 M342.6 589.8 A4.1 4.1 0 0 1 335 591.2" fill="none" stroke="#2A8AD6" stroke-width="1.2"/><path d="M343 583.6 V587.2 H339.6 Z M334.3 593.6 V589.8 H337.7 Z" fill="#2A8AD6"/><path d="M327.4 616 L336.2 602.6 L337.2 610.5 M330 612 H336" fill="none" stroke="#2E2E2E" stroke-width="1.3" stroke-linejoin="round"/><path d="M338.6 609.8 V619 M334 614.4 H343.2 M335.4 611.2 L341.8 617.6 M341.8 611.2 L335.4 617.6" stroke="#F39530" stroke-width="1"/><circle cx="338.6" cy="614.4" r="1.8" fill="#F9F9F9" stroke="#F39530" stroke-width="1"/><path d="M327.4 668 L336.2 654.6 L337.4 661.5 M330 664 H334.5" fill="none" stroke="#2E2E2E" stroke-width="1.3" stroke-linejoin="round"/><path d="M334.6 663.5 L341.2 657 Q343.2 655.8 342.7 658.4 L336.8 665.8" fill="#F9F9F9" stroke="#2E2E2E" stroke-width="0.9"/><path d="M330.2 669 Q331.6 664.4 335.2 664.2 Q337.6 665 336.8 667 Q334.2 669.4 330.2 669 Z" fill="#7DB6E8" stroke="#1565C0" stroke-width="1.1"/></svg>
</body></html>
